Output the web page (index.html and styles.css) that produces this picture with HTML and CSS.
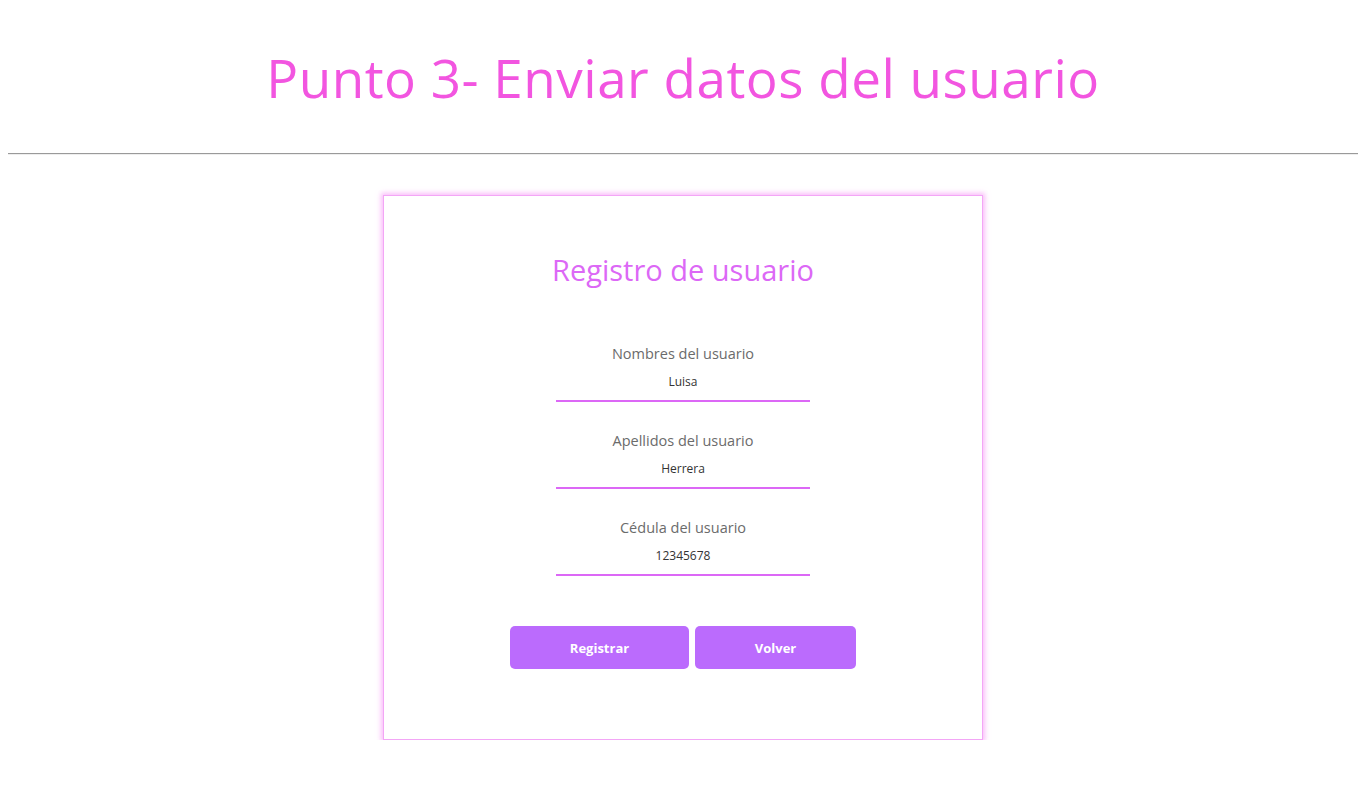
FILE: index.html
```html
<!DOCTYPE html>
<html lang="es">
<head>
<meta charset="utf-8">
<title>Punto 3</title>
<link rel="stylesheet" href="styles.css">
</head>
<body>
<h1 class="page-title">Punto 3- Enviar datos del usuario</h1>
<hr class="divider">
<main class="card">
  <h2 class="card-title">Registro de usuario</h2>
  <form class="form">
    <div class="field">
      <label class="field-label">Nombres del usuario</label>
      <input class="field-input" type="text" value="Luisa">
    </div>
    <div class="field">
      <label class="field-label">Apellidos del usuario</label>
      <input class="field-input" type="text" value="Herrera">
    </div>
    <div class="field">
      <label class="field-label">Cédula del usuario</label>
      <input class="field-input" type="text" value="12345678">
    </div>
    <div class="actions">
      <button type="button" class="btn btn-register">Registrar</button>
      <button type="button" class="btn btn-back">Volver</button>
    </div>
  </form>
</main>
</body>
</html>
```

FILE: styles.css
```css
body {
  margin: 8px;
  background: #ffffff;
  font-family: "Open Sans", "DejaVu Sans", sans-serif;
}

.page-title {
  margin: 0;
  padding-top: 42px;
  height: 95px;
  box-sizing: border-box;
  text-align: center;
  font-family: "Open Sans", sans-serif;
  font-weight: 400;
  font-size: 53px;
  line-height: 56px;
  color: #f255e0;
  letter-spacing: 0.5px;
}

.divider {
  margin: 50px 0 40px;
  border: 0;
  border-top: 1px solid #9a9a9a;
  border-bottom: 1px solid #eeeeee;
}

.card {
  width: 600px;
  box-sizing: border-box;
  margin: 0 auto;
  border: 1px solid #f3a6f6;
  box-shadow: 0 0 5px 2px rgba(246, 160, 246, 0.7);
  padding: 54px 0 70px;
  display: flex;
  flex-direction: column;
  align-items: center;
}

.card-title {
  margin: 0;
  font-family: "Open Sans", sans-serif;
  font-weight: 400;
  font-size: 29px;
  line-height: 40px;
  color: #dc68f6;
}

.form {
  margin-top: 52px;
  display: flex;
  flex-direction: column;
  align-items: center;
}

.field {
  width: 254px;
  display: flex;
  flex-direction: column;
  align-items: center;
  margin-bottom: 27px;
}

.field-label {
  font-family: "Open Sans", sans-serif;
  font-size: 14.5px;
  line-height: 24px;
  color: #6b6b6b;
}

.field-input {
  width: 100%;
  box-sizing: border-box;
  margin-top: 8px;
  border: 0;
  border-bottom: 2px solid #dc68f6;
  outline: none;
  background: transparent;
  text-align: center;
  font-family: "Open Sans", sans-serif;
  font-size: 12px;
  line-height: 16px;
  padding: 0 0 10px;
  color: #333333;
}

.actions {
  margin-top: 23px;
  display: flex;
  gap: 6px;
}

.btn {
  height: 43px;
  border: 0;
  border-radius: 5px;
  background: #bb6bfd;
  color: #ffffff;
  font-family: "Open Sans", sans-serif;
  font-weight: 700;
  font-size: 13px;
  cursor: pointer;
}

.btn-register {
  width: 179px;
}

.btn-back {
  width: 161px;
}
```
